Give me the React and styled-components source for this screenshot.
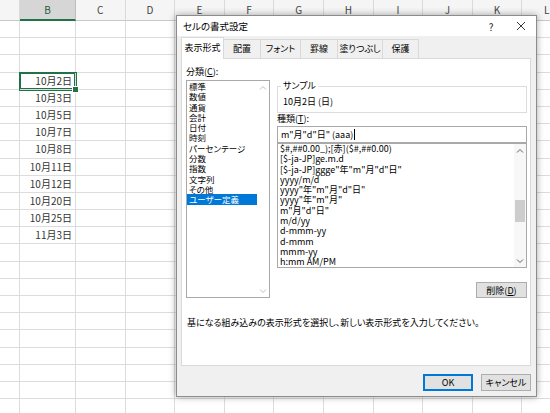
import React from "react";
import styled, { createGlobalStyle } from "styled-components";

const GlobalStyle = createGlobalStyle`
  html, body {
    margin: 0;
    padding: 0;
    background: #ffffff;
  }
  body {
    width: 550px;
    height: 413px;
    overflow: hidden;
    font-family: "Noto Sans CJK JP", "Noto Sans", sans-serif;
    font-feature-settings: "palt";
  }
`;

const COLS = ["A", "B", "C", "D", "E", "F", "G", "H", "I", "J", "K", "L"];
const ROW_COUNT = 23;
const DATES = {
  3: "10月2日",
  4: "10月3日",
  5: "10月5日",
  6: "10月7日",
  7: "10月8日",
  8: "10月11日",
  9: "10月12日",
  10: "10月20日",
  11: "10月25日",
  12: "11月3日",
};

const TABS = [
  { label: "表示形式", w: 43 },
  { label: "配置", w: 38 },
  { label: "フォント", w: 41 },
  { label: "罫線", w: 38 },
  { label: "塗りつぶし", w: 46 },
  { label: "保護", w: 37 },
];

const CATEGORIES = [
  "標準",
  "数値",
  "通貨",
  "会計",
  "日付",
  "時刻",
  "パーセンテージ",
  "分数",
  "指数",
  "文字列",
  "その他",
  "ユーザー定義",
];

const FORMATS = [
  '$#,##0.00_);[赤]($#,##0.00)',
  "[$-ja-JP]ge.m.d",
  '[$-ja-JP]ggge"年"m"月"d"日"',
  "yyyy/m/d",
  'yyyy"年"m"月"d"日"',
  'yyyy"年"m"月"',
  'm"月"d"日"',
  "m/d/yy",
  "d-mmm-yy",
  "d-mmm",
  "mmm-yy",
  "h:mm AM/PM",
];

const Screen = styled.div`
  position: relative;
  width: 550px;
  height: 413px;
  overflow: hidden;
  background: #fff;
`;

const Sheet = styled.div`
  display: grid;
  grid-template-columns: 20px 56px repeat(10, 49.6px);
  grid-template-rows: 21px repeat(${ROW_COUNT}, 17.2px);
`;

const HeaderCell = styled.div`
  box-sizing: border-box;
  background: ${(p) => (p.$selected ? "#d6d6d6" : "#f5f5f5")};
  border-right: 1px solid ${(p) => (p.$selected ? "#bdbdbd" : "#dadada")};
  border-bottom: ${(p) => (p.$selected ? "2px solid #217346" : "1px solid #c8c8c8")};
  color: ${(p) => (p.$selected ? "#1f5a39" : "#444")};
  font-size: 10px;
  line-height: 20px;
  text-align: center;
`;

const Cell = styled.div`
  position: relative;
  box-sizing: border-box;
  border-right: 1px solid #dcdcdc;
  border-bottom: 1px solid #dcdcdc;
  box-shadow: ${(p) => (p.$active ? "0 0 0 1px #217346, inset 0 0 0 1px #217346" : "none")};
  z-index: ${(p) => (p.$active ? 1 : 0)};
  padding-right: 3px;
  color: #333;
  font-size: 10px;
  line-height: 16px;
  text-align: right;
  white-space: nowrap;
`;

const FillHandle = styled.span`
  position: absolute;
  right: -4px;
  bottom: -4px;
  width: 5px;
  height: 5px;
  background: #217346;
  border: 1px solid #fff;
`;

const Dialog = styled.div`
  position: absolute;
  left: 176px;
  top: 15px;
  width: 361px;
  height: 382px;
  box-sizing: border-box;
  display: flex;
  flex-direction: column;
  border: 1px solid #8c8c8c;
  box-shadow: 0 0 7px rgba(0, 0, 0, 0.35);
  background: #f0f0f0;
  color: #000;
`;

const TitleBar = styled.div`
  display: flex;
  align-items: center;
  height: 20px;
  padding-left: 6px;
  background: #ffffff;
  font-size: 9.5px;
`;

const Title = styled.span`
  flex: 1;
`;

const TitleButton = styled.span`
  display: flex;
  align-items: center;
  justify-content: center;
  width: 30px;
  height: 20px;
  font-size: 10px;
  color: #222;
`;

const Body = styled.div`
  flex: 1;
  display: flex;
  flex-direction: column;
  padding: 1px 5px 0 4px;
`;

const TabRow = styled.div`
  display: flex;
  align-items: flex-end;
  height: 21px;
`;

const Tab = styled.div`
  position: relative;
  z-index: ${(p) => (p.$active ? 2 : 1)};
  box-sizing: border-box;
  width: ${(p) => p.$w}px;
  height: ${(p) => (p.$active ? 22 : 19)}px;
  margin-left: -1px;
  margin-bottom: ${(p) => (p.$active ? -1 : 0)}px;
  border: 1px solid #d9d9d9;
  border-bottom: none;
  background: ${(p) => (p.$active ? "#ffffff" : "#f0f0f0")};
  font-size: 9px;
  line-height: ${(p) => (p.$active ? 19 : 17)}px;
  text-align: center;
  white-space: nowrap;

  &:first-child {
    margin-left: 0;
  }
`;

const Panel = styled.div`
  box-sizing: border-box;
  width: 350px;
  height: 308px;
  padding: 7px 3px 0 4px;
  background: #ffffff;
  border: 1px solid #d9d9d9;
`;

const Columns = styled.div`
  display: flex;
  gap: 7px;
`;

const LeftCol = styled.div`
  display: flex;
  flex-direction: column;
  width: 84px;
`;

const RightCol = styled.div`
  display: flex;
  flex-direction: column;
  width: 250px;
`;

const Label = styled.div`
  font-size: 9px;
  line-height: 12px;
  white-space: nowrap;

  u {
    text-decoration: underline;
  }
`;

const ListBox = styled.div`
  box-sizing: border-box;
  display: flex;
  height: ${(p) => p.$h}px;
  margin-top: ${(p) => p.$mt || 0}px;
  border: 1px solid #a9a9a9;
  background: #fff;
  overflow: hidden;
`;

const Items = styled.div`
  flex: 1;
  min-width: 0;
`;

const Item = styled.div`
  padding-left: 2px;
  font-size: ${(p) => p.$size}px;
  line-height: 10.3px;
  height: 10.3px;
  white-space: nowrap;
  background: ${(p) => (p.$selected ? "#0078d7" : "transparent")};
  color: ${(p) => (p.$selected ? "#ffffff" : "#000000")};
`;

const ScrollBar = styled.div`
  display: flex;
  flex-direction: column;
  width: 12px;
  background: ${(p) => (p.$enabled ? "#f7f7f7" : "#ffffff")};
`;

const Arrow = styled.div`
  display: flex;
  align-items: center;
  justify-content: center;
  height: 12px;
  color: ${(p) => (p.$enabled ? "#606060" : "#bdbdbd")};
`;

const Track = styled.div`
  flex: 1;
  padding: 0 1px;
`;

const Thumb = styled.div`
  height: ${(p) => p.$h}px;
  margin-top: ${(p) => p.$top}px;
  background: #cdcdcd;
`;

const GroupBox = styled.div`
  position: relative;
  box-sizing: border-box;
  height: 27px;
  margin-top: 20px;
  padding: 3px 0 0 5px;
  border: 1px solid #dcdcdc;
  display: flex;
  align-items: center;
  font-size: 9px;
`;

const Legend = styled.span`
  position: absolute;
  top: -7px;
  left: 3px;
  padding: 0 2px;
  background: #fff;
  font-size: 9px;
  line-height: 12px;
`;

const TextInput = styled.div`
  box-sizing: border-box;
  display: flex;
  align-items: center;
  height: 17px;
  margin-top: 1px;
  padding-left: 3px;
  border: 1px solid #a9a9a9;
  font-size: 9px;
  white-space: nowrap;
`;

const Caret = styled.span`
  display: inline-block;
  width: 1px;
  height: 11px;
  margin-left: 1px;
  background: #000;
`;

const ButtonRow = styled.div`
  display: flex;
  justify-content: flex-end;
  gap: 8px;
  margin-top: ${(p) => p.$mt}px;
`;

const Button = styled.div`
  box-sizing: border-box;
  display: flex;
  align-items: center;
  justify-content: center;
  width: ${(p) => p.$w}px;
  height: ${(p) => p.$h}px;
  background: #e1e1e1;
  border: 1px solid ${(p) => (p.$default ? "#0078d7" : "#adadad")};
  box-shadow: ${(p) => (p.$default ? "inset 0 0 0 1px #0078d7" : "none")};
  font-size: 9px;

  u {
    text-decoration: underline;
  }
`;

const Description = styled.div`
  margin-top: 19px;
  padding-left: 1px;
  font-size: 9px;
  line-height: 12px;
  white-space: nowrap;
`;

const Chevron = ({ up }) => (
  <svg width="8" height="5" viewBox="0 0 8 5">
    <polyline
      points={up ? "1,4.5 4,1.5 7,4.5" : "1,0.5 4,3.5 7,0.5"}
      fill="none"
      stroke="currentColor"
      strokeWidth="1"
    />
  </svg>
);

const CloseIcon = () => (
  <svg width="10" height="10" viewBox="0 0 10 10">
    <path d="M1 1 L9 9 M9 1 L1 9" stroke="#222" strokeWidth="0.9" fill="none" />
  </svg>
);

const SpreadSheet = () => (
  <Sheet>
    {COLS.map((c) => (
      <HeaderCell key={c} $selected={c === "B"}>
        {c === "A" ? "" : c}
      </HeaderCell>
    ))}
    {Array.from({ length: ROW_COUNT }).map((_, r) =>
      COLS.map((c) => {
        const active = c === "B" && r === 3;
        return (
          <Cell key={c + r} $active={active}>
            {c === "B" ? DATES[r] : ""}
            {active && <FillHandle />}
          </Cell>
        );
      })
    )}
  </Sheet>
);

const FormatDialog = () => (
  <Dialog>
    <TitleBar>
      <Title>セルの書式設定</Title>
      <TitleButton>?</TitleButton>
      <TitleButton>
        <CloseIcon />
      </TitleButton>
    </TitleBar>
    <Body>
      <TabRow>
        {TABS.map((t, i) => (
          <Tab key={t.label} $w={t.w} $active={i === 0}>
            {t.label}
          </Tab>
        ))}
      </TabRow>
      <Panel>
        <Columns>
          <LeftCol>
            <Label>
              分類(<u>C</u>):
            </Label>
            <ListBox $h={218} $mt={2}>
              <Items>
                {CATEGORIES.map((c, i) => (
                  <Item key={c} $size={8.5} $selected={i === CATEGORIES.length - 1}>
                    {c}
                  </Item>
                ))}
              </Items>
              <ScrollBar>
                <Arrow>
                  <Chevron up />
                </Arrow>
                <Track />
                <Arrow>
                  <Chevron />
                </Arrow>
              </ScrollBar>
            </ListBox>
          </LeftCol>
          <RightCol>
            <GroupBox>
              <Legend>サンプル</Legend>
              10月2日 (日)
            </GroupBox>
            <Label>
              種類(<u>T</u>):
            </Label>
            <TextInput>
              m"月"d"日" (aaa)
              <Caret />
            </TextInput>
            <ListBox $h={125}>
              <Items>
                {FORMATS.map((f) => (
                  <Item key={f} $size={9}>
                    {f}
                  </Item>
                ))}
              </Items>
              <ScrollBar $enabled>
                <Arrow $enabled>
                  <Chevron up />
                </Arrow>
                <Track>
                  <Thumb $top={44} $h={22} />
                </Track>
                <Arrow $enabled>
                  <Chevron />
                </Arrow>
              </ScrollBar>
            </ListBox>
            <ButtonRow $mt={14}>
              <Button $w={51} $h={16}>
                削除(<u>D</u>)
              </Button>
            </ButtonRow>
          </RightCol>
        </Columns>
        <Description>
          基になる組み込みの表示形式を選択し、新しい表示形式を入力してください。
        </Description>
      </Panel>
      <ButtonRow $mt={8}>
        <Button $w={50} $h={17} $default>
          OK
        </Button>
        <Button $w={50} $h={17}>
          キャンセル
        </Button>
      </ButtonRow>
    </Body>
  </Dialog>
);

export default function App() {
  return (
    <>
      <GlobalStyle />
      <Screen>
        <SpreadSheet />
        <FormatDialog />
      </Screen>
    </>
  );
}
